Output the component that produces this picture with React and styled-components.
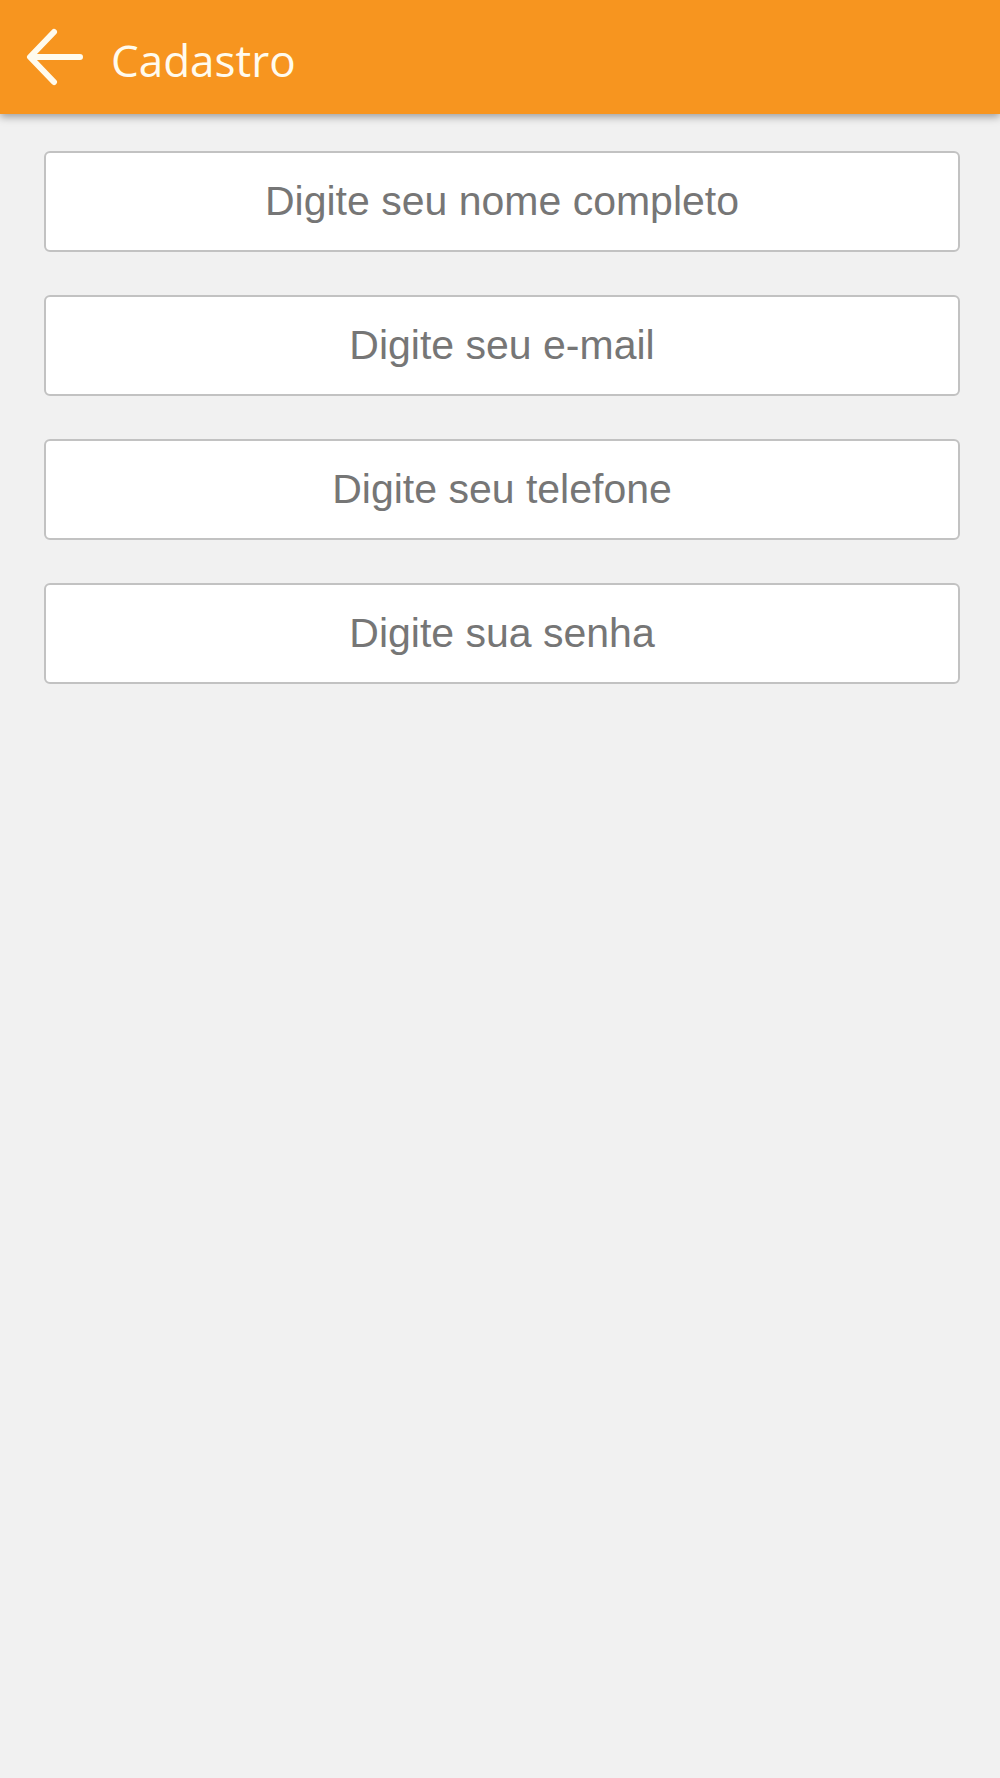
import React from 'react';
import styled, { createGlobalStyle } from 'styled-components';

const GlobalStyle = createGlobalStyle`
  html, body {
    margin: 0;
    padding: 0;
    background: #f1f1f1;
  }
`;

const Page = styled.div`
  min-height: 1778px;
  background: #f1f1f1;
  font-family: "Liberation Sans", Arial, sans-serif;
`;

const Header = styled.header`
  height: 114px;
  background: #f7951f;
  box-shadow: 0 3px 8px rgba(0, 0, 0, 0.35);
  display: flex;
  align-items: center;
  padding-left: 26px;
  gap: 27px;
  position: relative;
  z-index: 1;
`;

const BackButton = styled.button`
  background: none;
  border: none;
  padding: 0;
  display: flex;
  align-items: center;
  cursor: pointer;
`;

const Title = styled.h1`
  margin: 0;
  color: #fffbee;
  font-family: "Open Sans", "Noto Sans", sans-serif;
  font-weight: 400;
  font-size: 44px;
  line-height: 1;
  padding-top: 6px;
`;

const Form = styled.form`
  display: flex;
  flex-direction: column;
  gap: 43px;
  padding: 37px 40px 0 44px;
`;

const Field = styled.input`
  box-sizing: border-box;
  width: 100%;
  height: 101px;
  background: #fff;
  border: 2px solid #c2c2c2;
  border-radius: 6px;
  font-family: "Liberation Sans", Arial, sans-serif;
  font-size: 41px;
  text-align: center;
  color: #555;
  outline: none;

  &::placeholder {
    color: #767676;
  }
`;

const ArrowIcon = () => (
  <svg width="58" height="60" viewBox="0 0 58 60" fill="none">
    <path
      d="M54 30H5M28 5L4 30L28 55"
      stroke="#fffbee"
      strokeWidth="6"
      strokeLinecap="round"
      strokeLinejoin="round"
    />
  </svg>
);

const fields = [
  { type: 'text', placeholder: 'Digite seu nome completo' },
  { type: 'email', placeholder: 'Digite seu e-mail' },
  { type: 'tel', placeholder: 'Digite seu telefone' },
  { type: 'password', placeholder: 'Digite sua senha' },
];

const App = () => {
  return (
    <Page>
      <GlobalStyle />
      <Header>
        <BackButton aria-label="Voltar">
          <ArrowIcon />
        </BackButton>
        <Title>Cadastro</Title>
      </Header>
      <Form onSubmit={e => e.preventDefault()}>
        {fields.map(f => (
          <Field key={f.placeholder} type={f.type} placeholder={f.placeholder} />
        ))}
      </Form>
    </Page>
  );
};

export default App;
